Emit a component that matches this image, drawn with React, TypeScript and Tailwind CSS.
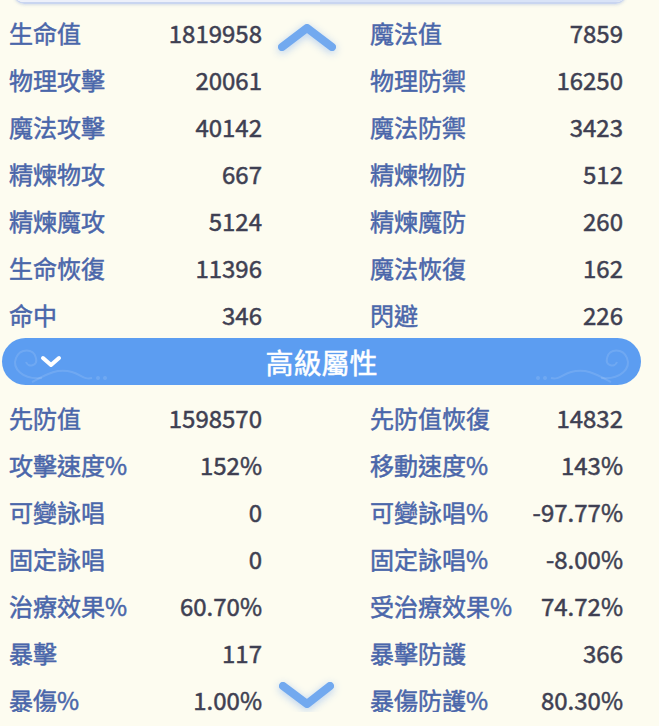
const basic: [string, string, string, string][] = [
  ['生命值', '1819958', '魔法值', '7859'],
  ['物理攻擊', '20061', '物理防禦', '16250'],
  ['魔法攻擊', '40142', '魔法防禦', '3423'],
  ['精煉物攻', '667', '精煉物防', '512'],
  ['精煉魔攻', '5124', '精煉魔防', '260'],
  ['生命恢復', '11396', '魔法恢復', '162'],
  ['命中', '346', '閃避', '226'],
]

const advanced: [string, string, string, string][] = [
  ['先防值', '1598570', '先防值恢復', '14832'],
  ['攻擊速度%', '152%', '移動速度%', '143%'],
  ['可變詠唱', '0', '可變詠唱%', '-97.77%'],
  ['固定詠唱', '0', '固定詠唱%', '-8.00%'],
  ['治療效果%', '60.70%', '受治療效果%', '74.72%'],
  ['暴擊', '117', '暴擊防護', '366'],
  ['暴傷%', '1.00%', '暴傷防護%', '80.30%'],
]

function StatRow({ row }: { row: [string, string, string, string] }) {
  return (
    <div className="flex h-[47px] items-center pl-[9px]">
      <div className="flex w-[253px] items-center justify-between">
        <span className="text-[#4a66aa]">{row[0]}</span>
        <span className="text-[#3e3f52]">{row[1]}</span>
      </div>
      <div className="ml-[108px] flex w-[253px] items-center justify-between">
        <span className="text-[#4a66aa]">{row[2]}</span>
        <span className="text-[#3e3f52]">{row[3]}</span>
      </div>
    </div>
  )
}

function Chevron({ up }: { up?: boolean }) {
  return (
    <svg width="64" height="40" viewBox="0 0 64 40" className="drop-shadow-[0_2px_4px_rgba(90,150,240,0.45)]">
      <path
        d={up ? 'M7 30 L32 11 L57 30' : 'M8 11 L32 29 L55 11'}
        fill="none"
        stroke="#72a9ef"
        strokeWidth="8"
        strokeLinecap="round"
        strokeLinejoin="round"
      />
    </svg>
  )
}

function Swirl({ flip }: { flip?: boolean }) {
  return (
    <svg width="110" height="47" viewBox="0 0 110 47" className={flip ? '-scale-x-100' : ''}>
      <g fill="none" stroke="#ffffff" strokeOpacity="0.12" strokeWidth="2">
        <path d="M40 40 C20 42 10 30 14 20 C18 10 32 10 34 20 C36 28 26 30 24 24" />
        <path d="M30 44 C45 36 55 30 70 34 C80 37 82 42 90 40" />
      </g>
      <circle cx="96" cy="40" r="2" fill="#ffffff" fillOpacity="0.12" />
      <circle cx="103" cy="40" r="2" fill="#ffffff" fillOpacity="0.12" />
    </svg>
  )
}

export default function App() {
  return (
    <div className="h-[726px] w-[659px] overflow-hidden bg-[#fdfcf0] font-['Noto_Sans_CJK_TC','Noto_Sans',sans-serif] text-[24px] font-normal leading-none [-webkit-text-stroke:0.5px_currentColor]">
      <div className="relative h-[712px] overflow-hidden">
        <div className="mx-[14px] mr-[33px] -mt-[20px] flex h-[24px] overflow-hidden rounded-b-[10px] border-b-2 border-[#c9d5f0] shadow-[0_1px_3px_rgba(120,150,210,0.3)]">
          <div className="flex-1 bg-[#edf0fa]" />
          <div className="flex-1 bg-[#d9e3f7]" />
        </div>

        <div className="pt-[5px]">
          {basic.map((r) => (
            <StatRow key={r[0]} row={r} />
          ))}
        </div>

        <div className="relative mx-[2px] mr-[18px] flex h-[47px] items-center justify-center overflow-hidden rounded-full bg-[#5c9df1]">
          <div className="absolute left-0 top-0">
            <Swirl />
          </div>
          <div className="absolute right-0 top-0">
            <Swirl flip />
          </div>
          <svg width="22" height="14" viewBox="0 0 22 14" className="absolute left-[38px] top-[17px]">
            <path d="M3 3 L11 10 L19 3" fill="none" stroke="#ffffff" strokeWidth="4" strokeLinecap="round" strokeLinejoin="round" />
          </svg>
          <span className="relative text-[28px] text-white">高級屬性</span>
        </div>

        <div className="pt-[9px]">
          {advanced.map((r) => (
            <StatRow key={r[0]} row={r} />
          ))}
        </div>

        <div className="absolute left-[275px] top-[17px]">
          <Chevron up />
        </div>
        <div className="absolute left-[275px] top-[675px]">
          <Chevron />
        </div>
      </div>
    </div>
  )
}
